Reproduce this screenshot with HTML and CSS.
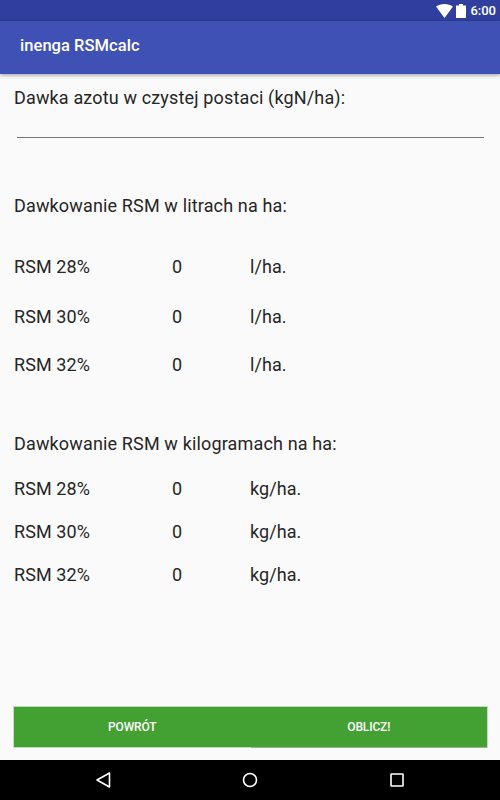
FILE: index.html
```html
<!DOCTYPE html>
<html>
<head>
	<title>inenga RSMcalc</title>
	<link rel="stylesheet" href="styles.css">
</head>
<body>
	<div class="status-bar">
		<svg class="wifi" width="17" height="14" viewBox="0 0 17 14"><path d="M0 2.600C2.400 .9 5.300 0 8.500 0s6.100 .9 8.500 2.600L8.500 14z" fill="#fff"/></svg>
		<svg class="battery" width="10" height="14" viewBox="0 0 10 14"><path d="M3 0h4v1.500h3V14H0V1.500h3z" fill="#fff"/></svg>
		<span class="clock">6:00</span>
	</div>
	<div class="app-bar">inenga RSMcalc</div>

	<div class="content">
		<div class="label first">Dawka azotu w czystej postaci (kgN/ha):</div>
		<div class="input-line"></div>

		<div class="label litres-title">Dawkowanie RSM w litrach na ha:</div>
		<div class="rows litres">
			<div class="row"><span>RSM 28%</span><span>0</span><span>l/ha.</span></div>
			<div class="row"><span>RSM 30%</span><span>0</span><span>l/ha.</span></div>
			<div class="row"><span>RSM 32%</span><span>0</span><span>l/ha.</span></div>
		</div>

		<div class="label kilos-title">Dawkowanie RSM w kilogramach na ha:</div>
		<div class="rows kilos">
			<div class="row"><span>RSM 28%</span><span>0</span><span>kg/ha.</span></div>
			<div class="row"><span>RSM 30%</span><span>0</span><span>kg/ha.</span></div>
			<div class="row"><span>RSM 32%</span><span>0</span><span>kg/ha.</span></div>
		</div>

		<div class="button-container">
			<button class="back">Powrót</button>
			<button class="calc">Oblicz!</button>
		</div>
	</div>

	<div class="nav-bar">
		<svg width="16" height="18" viewBox="0 0 16 18"><path d="M14.500 2v14L2 9z" fill="none" stroke="#fff" stroke-width="1.600" stroke-linejoin="round"/></svg>
		<svg width="16" height="16" viewBox="0 0 16 16"><circle cx="8" cy="8" r="6.500" fill="none" stroke="#fff" stroke-width="1.600"/></svg>
		<svg class="recents" width="14" height="14" viewBox="0 0 14 14"><rect x="1" y="1" width="12" height="12" rx="0.500" fill="none" stroke="#fff" stroke-width="1.600"/></svg>
	</div>
</body>
</html>
```

FILE: styles.css
```css
html, body {
	margin: 0;
	height: 100%;
}

body {
	display: flex;
	flex-direction: column;
	height: 800px;
	overflow: hidden;
	background-color: #fafafa;
	color: #262626;
	font-family: Roboto, sans-serif;
}

.status-bar {
	display: flex;
	align-items: center;
	justify-content: flex-end;
	height: 21px;
	padding-right: 4px;
	background-color: #303f9f;
	color: #fff;
}

.wifi {
	margin-right: 3px;
}

.battery {
	margin-right: 4px;
}

.clock {
	font-size: 13px;
	font-weight: 500;
}

.app-bar {
	position: relative;
	height: 53px;
	line-height: 50px;
	padding-left: 20px;
	background-color: #3f51b5;
	color: #fff;
	font-size: 16.500px;
	font-weight: 500;
	letter-spacing: 0.050px;
	box-shadow: 0 1px 4px rgba(0, 0, 0, 0.4);
}

.content {
	display: flex;
	flex-direction: column;
	flex: 1;
	padding: 0 13px 13px 14px;
}

.label {
	font-size: 18px;
	line-height: 22px;
	letter-spacing: 0.150px;
}

.first {
	margin-top: 13px;
}

.input-line {
	height: 1px;
	margin: 28px 3px 0 3px;
	background-color: #757575;
}

.litres-title {
	margin-top: 57px;
}

.kilos-title {
	margin-top: 57px;
}

.rows {
	display: flex;
	flex-direction: column;
}

.litres {
	margin-top: 39px;
}

.litres .row:nth-child(2) {
	margin-top: 28px;
}

.litres .row:nth-child(3) {
	margin-top: 26px;
}

.kilos {
	margin-top: 23px;
	gap: 21px;
}

.row {
	display: grid;
	grid-template-columns: 158px 78px 1fr;
	font-size: 18px;
	line-height: 22px;
	letter-spacing: 0.080px;
}

.button-container {
	display: flex;
	margin-top: auto;
	height: 40px;
	background-color: #43a033;
	box-shadow: 0 0 0 1px rgba(90, 170, 80, 0.35);
}

button {
	flex: 1;
	border: 0;
	background: none;
	color: #fff;
	font-family: Roboto, sans-serif;
	font-size: 12px;
	font-weight: 500;
	letter-spacing: -0.150px;
	text-transform: uppercase;
}

.calc {
	box-shadow: 0 1px 0 rgba(0, 0, 0, 0.2);
}

.nav-bar {
	display: flex;
	align-items: center;
	justify-content: center;
	gap: 131px;
	height: 40px;
	padding-right: 1px;
	background-color: #000;
}

.recents {
	margin-left: 1px;
}
```
